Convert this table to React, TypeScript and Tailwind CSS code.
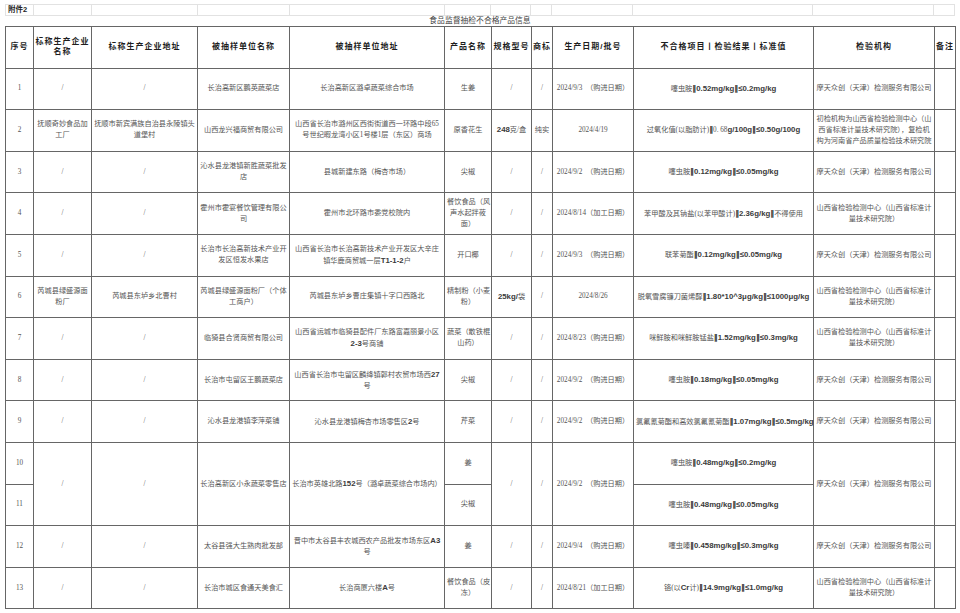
import type { ReactNode } from "react";

// segments between ** are latin runs set in bold sans, like the source sheet
function rich(s: string): ReactNode {
  return s.split("**").map((part, i) =>
    i % 2 === 1 ? (
      <span
        key={i}
        className="inline-block font-['Liberation_Sans','Noto_Sans_CJK_SC',sans-serif] text-[7.8px] font-bold text-[#3a3a3a]"
      >
        {part.split("‖").map((seg, j) => (
          <span key={j}>
            {j > 0 && (
              <span className="font-['DejaVu_Sans',sans-serif] font-bold text-[#222]">‖</span>
            )}
            {seg}
          </span>
        ))}
      </span>
    ) : (
      <span key={i}>{part}</span>
    )
  );
}

type Row = [string, string, string, string, string, string, string, string, string, string, string];

const MOTIAN = "摩天众创（天津）检测服务有限公司";
const SHANXI = "山西省检验检测中心（山西省标准计\n量技术研究院）";

const top: Row[] = [
  ["1", "/", "/", "长治高新区鹏英蔬菜店", "长治高新区潞卓蔬菜综合市场", "生姜", "/", "/", "2024/9/3  （购进日期）", "噻虫胺**‖0.52mg/kg‖≤0.2mg/kg**", MOTIAN],
  ["2", "抚顺奇妙食品加\n工厂", "抚顺市新宾满族自治县永陵镇头\n道堡村", "山西龙兴福商贸有限公司", "山西省长治市潞州区西街街道西一环路中段65\n号世纪暇龙湾小区1号楼1层（东区）商场", "原香花生", "**248**克/盒", "纯实", "2024/4/19", "过氧化值(以脂肪计)**‖**0. 68**g/100g‖≤0.50g/100g**", "初检机构为山西省检验检测中心（山\n西省标准计量技术研究院），复检机\n构为河南省产品质量检验技术研究院"],
  ["3", "/", "/", "沁水县龙港镇新胜蔬菜批发\n店", "县城新建东路（梅杏市场）", "尖椒", "/", "/", "2024/9/2  （购进日期）", "噻虫胺**‖0.12mg/kg‖≤0.05mg/kg**", MOTIAN],
  ["4", "/", "/", "霍州市霍宴餐饮管理有限公\n司", "霍州市北环路市委党校院内", "餐饮食品（风\n声水起拌莜\n面）", "/", "/", "2024/8/14（加工日期）", "苯甲酸及其钠盐(以苯甲酸计)**‖2.36g/kg‖**不得使用", SHANXI],
  ["5", "/", "/", "长治市长治高新技术产业开\n发区恒发水果店", "山西省长治市长治高新技术产业开发区大辛庄\n镇华鹿商贸城一层**T1-1-2**户", "开口椰", "/", "/", "2024/9/3  （购进日期）", "联苯菊酯**‖0.12mg/kg‖≤0.05mg/kg**", MOTIAN],
  ["6", "芮城县绿盛源面\n粉厂", "芮城县东垆乡北曹村", "芮城县绿盛源面粉厂（个体\n工商户）", "芮城县东垆乡曹庄集镇十字口西路北", "精制粉（小麦\n粉）", "**25kg/**袋", "/", "2024/8/26", "脱氧雪腐镰刀菌烯醇**‖1.80*10^3μg/kg‖≤1000μg/kg**", SHANXI],
  ["7", "/", "/", "临猗县合贤商贸有限公司", "山西省运城市临猗县配件厂东路富嘉丽景小区\n**2-3**号商铺", "蔬菜（散铁棍\n山药）", "/", "/", "2024/8/23（购进日期）", "咪鲜胺和咪鲜胺锰盐**‖1.52mg/kg‖≤0.3mg/kg**", SHANXI],
  ["8", "/", "/", "长治市屯留区王鹏蔬菜店", "山西省长治市屯留区麟绛镇郭村农贸市场西**27**\n号", "尖椒", "/", "/", "2024/9/2  （购进日期）", "噻虫胺**‖0.18mg/kg‖≤0.05mg/kg**", MOTIAN],
  ["9", "/", "/", "沁水县龙港镇李萍菜铺", "沁水县龙港镇梅杏市场零售区**2**号", "芹菜", "/", "/", "2024/9/2  （购进日期）", "氯氟氰菊酯和高效氯氟氰菊酯**‖1.07mg/kg‖≤0.5mg/kg**", MOTIAN],
];

const bottom: Row[] = [
  ["12", "/", "/", "太谷县强大生熟肉批发部", "晋中市太谷县丰农城西农产品批发市场东区**A3**\n号", "姜", "/", "/", "2024/9/4  （购进日期）", "噻虫嗪**‖0.458mg/kg‖≤0.3mg/kg**", MOTIAN],
  ["13", "/", "/", "长治市城区食通天美食汇", "长治商厦六楼**A**号", "餐饮食品（皮\n冻）", "/", "/", "2024/8/21（加工日期）", "铬(以**Cr**计)**‖14.9mg/kg‖≤1.0mg/kg**", SHANXI],
];

const headers = [
  "序号",
  "标称生产企业\n名称",
  "标称生产企业地址",
  "被抽样单位名称",
  "被抽样单位地址",
  "产品名称",
  "规格型号",
  "商标",
  "生产日期/批号",
  "不合格项目丨检验结果丨标准值",
  "检验机构",
  "备注",
];

const td = "border border-[#666] px-[2px] text-center align-middle whitespace-pre leading-[11px]";
const faint = "h-full border-r border-[#e2e2e2]";

function DataRow({ r }: { r: Row }) {
  return (
    <tr className="h-[41.6px]">
      {r.map((c, i) => (
        <td key={i} className={td}>
          {rich(c)}
        </td>
      ))}
      <td className={td}></td>
    </tr>
  );
}

export default function App() {
  return (
    <div className="w-[960px] h-[613px] overflow-hidden bg-white font-['Liberation_Serif','Noto_Sans_CJK_SC',serif] text-[7.2px] text-[#555]">
      <div className="pl-[5px] pt-[4px]">
        <div className="flex h-[12px] w-[950px] border-y border-l border-[#e2e2e2]">
          <div className={`${faint} w-[28px] pl-[2px] font-['Liberation_Sans','Noto_Sans_CJK_SC',sans-serif] text-[7.5px] font-bold leading-[10px] text-[#222] whitespace-nowrap`}>
            附件2
          </div>
          <div className={`${faint} w-[58px]`} />
          <div className={`${faint} w-[106px]`} />
          <div className={`${faint} w-[92px]`} />
          <div className={`${faint} w-[155px]`} />
          <div className={`${faint} w-[47px]`} />
          <div className={`${faint} w-[40px]`} />
          <div className={`${faint} w-[21px]`} />
          <div className={`${faint} w-[81px]`} />
          <div className={`${faint} w-[180px]`} />
          <div className={`${faint} w-[121px]`} />
          <div className={`${faint} w-[21px]`} />
        </div>
        <div className="flex h-[10px] w-[950px] items-center justify-center text-[7.8px] text-[#444]">
          食品监督抽检不合格产品信息
        </div>
        <table className="w-[950px] table-fixed border-collapse">
          <colgroup>
            <col className="w-[28px]" />
            <col className="w-[58px]" />
            <col className="w-[106px]" />
            <col className="w-[92px]" />
            <col className="w-[155px]" />
            <col className="w-[47px]" />
            <col className="w-[40px]" />
            <col className="w-[21px]" />
            <col className="w-[81px]" />
            <col className="w-[180px]" />
            <col className="w-[121px]" />
            <col className="w-[21px]" />
          </colgroup>
          <thead>
            <tr className="h-[41.6px]">
              {headers.map((h) => (
                <th
                  key={h}
                  className="border border-[#666] px-0 text-center align-middle whitespace-pre font-['Liberation_Sans','Noto_Sans_CJK_SC',sans-serif] text-[8px] font-bold leading-[10px] tracking-[1px] text-[#1e1e1e]"
                >
                  {h}
                </th>
              ))}
            </tr>
          </thead>
          <tbody>
            {top.map((r) => (
              <DataRow key={r[0]} r={r} />
            ))}
            <tr className="h-[41.6px]">
              <td className={td}>10</td>
              <td className={td} rowSpan={2}>/</td>
              <td className={td} rowSpan={2}>/</td>
              <td className={td} rowSpan={2}>长治高新区小永蔬菜零售店</td>
              <td className={td} rowSpan={2}>
                {rich("长治市英雄北路**152**号（潞卓蔬菜综合市场内）")}
              </td>
              <td className={td}>姜</td>
              <td className={td} rowSpan={2}>/</td>
              <td className={td} rowSpan={2}>/</td>
              <td className={td} rowSpan={2}>2024/9/2  （购进日期）</td>
              <td className={td}>{rich("噻虫胺**‖0.48mg/kg‖≤0.2mg/kg**")}</td>
              <td className={td} rowSpan={2}>{MOTIAN}</td>
              <td className={td} rowSpan={2}></td>
            </tr>
            <tr className="h-[41.6px]">
              <td className={td}>11</td>
              <td className={td}>尖椒</td>
              <td className={td}>{rich("噻虫胺**‖0.48mg/kg‖≤0.05mg/kg**")}</td>
            </tr>
            {bottom.map((r) => (
              <DataRow key={r[0]} r={r} />
            ))}
          </tbody>
        </table>
      </div>
    </div>
  );
}
